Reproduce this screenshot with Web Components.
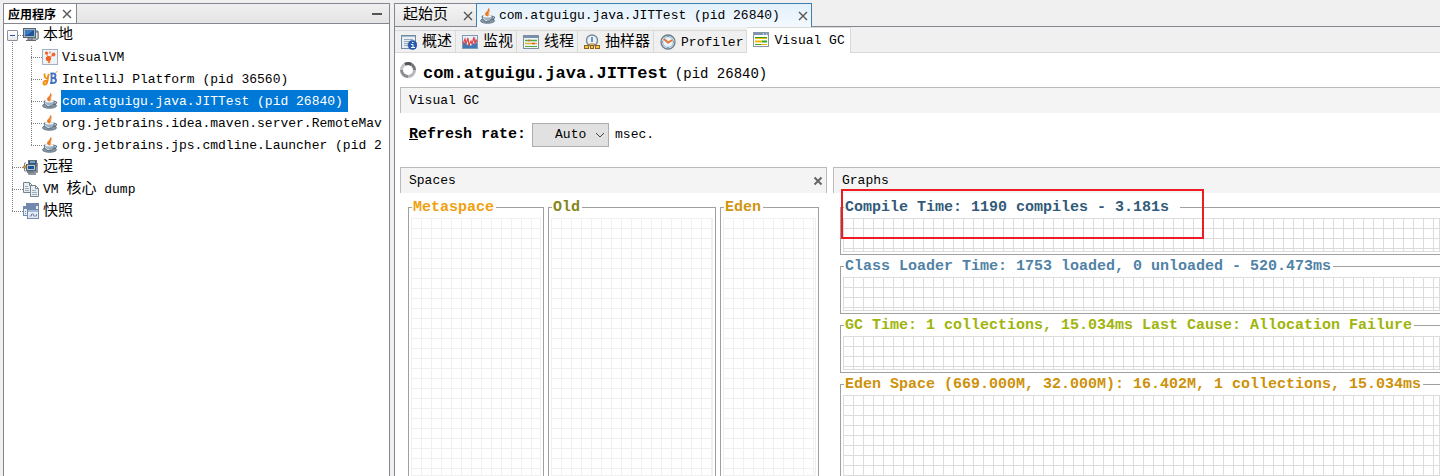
<!DOCTYPE html>
<html lang="zh-CN">
<head>
<meta charset="utf-8">
<title>VisualVM</title>
<style>
html, body { margin: 0; height: 100%; }
body { overflow: hidden; background: #f0f0f0; color: #000; font: 13px/22px "Liberation Mono", "Noto Sans CJK SC", monospace; }
</style>
</head>
<body>
<vm-app></vm-app>
<script>
const ICONS = {
  cup: `<ellipse cx="7.500" cy="12.800" rx="7" ry="2.500" fill="#8797a5" stroke="#56687a" stroke-width=".8"/><path d="M2 8h10.500c0 3-1.700 5.500-5.200 5.500S2 11 2 8Z" fill="#9fb2c1" stroke="#4f6579" stroke-width=".8"/><path d="M3.500 10c.5 1.800 1.800 2.600 3.500 2.600" stroke="#dbe5ec" fill="none"/><ellipse cx="7.300" cy="8.200" rx="4.300" ry="1.200" fill="#f4f7f9"/><path d="M12.500 8.500c3-.3 2.500 3.200-1.200 3" fill="none" stroke="#566b7e" stroke-width="1.200"/><path d="M8.500 .5C11 2.500 6.500 4 8 8L6 7.500C3.500 4.800 8.800 3.800 8.500 .5Z" fill="#e8761c" stroke="#e8761c" stroke-width=".8"/><path d="M11 3C8 4.500 9.500 6 9.500 8L8.500 7.500C7 5.500 8 4 11 3Z" fill="#f19a4a"/>`,
  vvm: `<rect x=".5" y=".5" width="15" height="15" fill="#eef3f8" stroke="#a3b2c2"/><path d="M4 4l3 5 5-4M7 9v3" stroke="#f79a6b" stroke-width="1.200" fill="none"/><circle cx="4.500" cy="4" r="1.500" fill="#ee5b1d"/><circle cx="8" cy="3.500" r="1" fill="#f08a55"/><circle cx="11.500" cy="5.500" r="1.900" fill="#f26a2e"/><circle cx="6.500" cy="9.500" r="2.600" fill="#ed621f"/><circle cx="7" cy="13" r="1.300" fill="#f0864e"/>`,
  jb: `<path d="M8.500 2.500h2.500c3.300 0 3.300 4.500 0 4.500H9.500m1.500 0c4 0 4 5 0 5H8" stroke="#4774c0" stroke-width="1.900" fill="none"/><path d="M9.500 2v10" stroke="#4774c0" stroke-width="1.800"/><path d="M2.500 2.500c0 4 .5 5 3.500 5M7 3C5 6 6.500 9 4.800 12 3.800 14 1.500 14 1.500 12.200S3.500 9.700 5.500 9.700" stroke="#f28d12" stroke-width="1.900" fill="none"/><path d="M13.500 1.500L15.500 .5" stroke="#f5a11a"/>`,
  pc: `<path d="M4 4h11v8H8z" fill="#c9cfd3" stroke="#626b72"/><path d="M13 5h2v7h-2" fill="#e5e9eb" stroke="#6c747a"/><rect x=".5" y="1.500" width="12" height="9" fill="#a8b5bf" stroke="#536675"/><rect x="2" y="3" width="9" height="6" fill="#1d559b"/><path d="M2 3h9L4 8H2Z" fill="#3c7cc4"/><path d="M5 11h4v2H5zM3 13.500h10" stroke="#616970" fill="#bcc4ca"/><path d="M10 10h1" stroke="#63cc38"/>`,
  remote: `<rect x="5.500" y="1.500" width="8" height="6" fill="#2b568b" stroke="#5f6e79"/><path d="M7 3h5" stroke="#d9e4ec"/><rect x="3.500" y="5.500" width="9" height="6" fill="#b8c5cf" stroke="#52616d"/><rect x="5" y="7" width="6" height="3" fill="#17559d"/><path d="M14 4v9H6v2h7" fill="none" stroke="#697680" stroke-width="1.500"/><path d="M3 4H1.500v8H4" fill="none" stroke="#888"/><circle cx="1.800" cy="8" r="1.500" fill="#d69b45" stroke="#88602b" stroke-width=".6"/><path d="M4 13h7" stroke="#71808b" stroke-width="2"/>`,
  dump: `<g fill="#e8edf2" stroke="#75838f"><path d="M.5 1.500h6l3 3v7h-9zM6.500 1.500v3h3"/><path d="M7.500 4.500h5l3 3v8h-8zM12.500 4.500v3h3"/></g><path d="M2 5.500h3M2 7.500h4M2 9.500h4M9 9.500h4M9 11.500h5M9 13.500h5" stroke="#9cacbb"/>`,
  snap: `<g fill="#e7edf5" stroke="#7089ad"><rect x="3.500" y=".5" width="12" height="9"/><path d="M4 2h11" stroke-width="2"/><rect x=".5" y="3.500" width="12" height="9"/><path d="M1 5h11" stroke-width="2"/><rect x="4.500" y="6.500" width="11" height="9"/></g><path d="M5 8h10" stroke="#6285b8"/><path d="M6.500 13h2v-2h2v2h3v-2" stroke="#758aa5" fill="none"/><path d="M2 8.500h1M2 10.500h1" stroke="#7d8fa8"/>`,
  info: `<rect x=".5" y="1.500" width="14" height="13" fill="#e7eff5" stroke="#718ba4"/><path d="M1 2.500h13" stroke="#a6bdd0"/><path d="M3 5.500h9M3 7.500h7M3 9.500h4M3 11.500h4" stroke="#9caab5"/><circle cx="11.500" cy="11" r="4.500" fill="#295bb4" stroke="#17458f" stroke-width=".5"/><path d="M10 10.500h2v3M10 13.500h4" fill="none" stroke="#fff"/><path d="M11 8.500h1.500" stroke="#fff" stroke-width="1.200"/>`,
  monitor: `<rect x=".5" y="1.500" width="15" height="13" fill="#e9f1f8" stroke="#7d9bb9"/><path d="M1 14v-4l2-2 2 3 2-1 2 2 2-3 2 1 2-2v6z" fill="#3e78b7"/><path d="M1 10l2-5 1 5 2-6 1 7 2-4 1 3 2-7 1 7 1-4 1 2" fill="none" stroke="#df4545" stroke-width="1.200"/>`,
  threads: `<rect x=".5" y="1.500" width="15" height="13" fill="#f2f5f8" stroke="#7d8ea0"/><path d="M1 3h14" stroke="#7890ab" stroke-width="2"/><path d="M2 6.500h12" stroke="#55a83c" stroke-width="1.500"/><path d="M2 9.500h12" stroke="#d6ba29" stroke-width="1.500"/><path d="M2 12.500h12" stroke="#50a746"/><path d="M5 6.500h2M9 9.500h3" stroke="#df5c31" stroke-width="1.500"/>`,
  sampler: `<circle cx="8" cy="6.500" r="5.500" fill="#e9f1f6" stroke="#79899a" stroke-width="1.400"/><path d="M8 3v4M8 5v3" stroke="#3979b6" stroke-width="1.500"/><path d="M3 12l3-2h4l3 2" stroke="#a77618" fill="none"/><g fill="#f1c552" stroke="#936315"><rect x=".5" y="11.500" width="4" height="3"/><rect x="6.500" y="11.500" width="3" height="3"/><rect x="11.500" y="11.500" width="4" height="3"/></g>`,
  profiler: `<circle cx="8" cy="8" r="7" fill="#dbeaf5" stroke="#6e7c88" stroke-width="1.300"/><circle cx="8" cy="8" r="5.300" fill="#eaf3f9" stroke="#9bbdd8"/><path d="M4 5l4 3.500L12.500 6" fill="none" stroke="#e37430" stroke-width="2"/><path d="M8 2v1M8 13v1M2 8h1M13 8h1" stroke="#4b7cab"/>`,
  gc: `<rect x=".5" y=".5" width="15" height="14" fill="#fff" stroke="#8996a3"/><path d="M1 2h14" stroke="#8095b2" stroke-width="2"/><path d="M10 2h1M13 2h1" stroke="#fff"/><path d="M2 5.500h12" stroke="#2e9b25"/><path d="M2 6.500h12" stroke="#efc000"/><path d="M2 9.500h7" stroke="#efb900" stroke-width="2"/><path d="M9 9.500h5" stroke="#34a82a" stroke-width="2"/><path d="M2 12.500h6" stroke="#34a82a"/><path d="M8 12.500h6" stroke="#e5b500"/>`,
  spin: `<g fill="none" stroke-width="3"><path d="M8 1.500A6.500 6.500 0 0 1 14.500 8" stroke="#777780"/><path d="M14.500 8A6.500 6.500 0 0 1 8 14.500" stroke="#b7b7bc"/><path d="M8 14.500A6.500 6.500 0 0 1 1.500 8" stroke="#8c8c92"/><path d="M1.500 8A6.500 6.500 0 0 1 8 1.500" stroke="#c4c4c8"/><path d="M5 2.300A6.500 6.500 0 0 1 11 2.300" stroke="#55555d"/></g>`,
  close: `<path d="M4 4l8 8M12 4l-8 8" stroke="#555" stroke-width="1.400"/>`,
  closeBold: `<path d="M4.500 4.500l7 7M11.500 4.500l-7 7" stroke="#666" stroke-width="2"/>`,
  min: `<path d="M3 8h10" stroke="#555" stroke-width="2"/>`,
  down: `<path d="M4 6l4 4 4-4" fill="none" stroke="#444"/>`
};

function define(name, html, ready) {
  const t = document.createElement('template');
  t.innerHTML = '<style>*{box-sizing:border-box}button{font:inherit;color:inherit;margin:0;padding:0;border:0;background:none}</style>' + html;
  customElements.define(name, class extends HTMLElement {
    connectedCallback() {
      if (this.shadowRoot) return;
      this.attachShadow({ mode: 'open' }).append(t.content.cloneNode(true));
      if (ready) ready(this, this.shadowRoot);
    }
  });
}

/* One row of the application tree, with its dotted guides */
define('vm-node', `<style>
:host{display:block}
.row{display:flex;align-items:center;height:22px;white-space:nowrap}
.g{flex:none;width:19px;height:22px;--dot:#808080 0 1px,transparent 1px 2px;
 background:repeating-linear-gradient(180deg,var(--dot)) 8px 0/1px var(--v,22px) no-repeat,
 repeating-linear-gradient(90deg,var(--dot)) 8px 11px/var(--h,11px) 1px no-repeat}
.g.parent{display:none;--h:0}
:host([level="2"]) .parent{display:block}
:host([last]) .own{--v:12px}
:host([open]) .own{background-position:8px 12px,8px 11px}
button{display:none;width:11px;height:11px;margin:6px 0 0 3px;border:1px solid #8a929c;border-radius:1px;background:linear-gradient(#2d4fa5,#2d4fa5) 2px 4px/5px 1px no-repeat,linear-gradient(#fff,#e8e8e8)}
:host([open]) button{display:block}
.label{padding:2px 5px 0 1px;margin-left:3px;line-height:20px}
:host([selected]) .label{background:#0078d7;color:#fff}
</style><div class="row"><span class="g parent"></span><span class="g own"><button aria-label="折叠"></button></span><vm-icon></vm-icon><span class="label"><slot></slot></span></div>`,
  (el, r) => r.querySelector('vm-icon').setAttribute('name', el.getAttribute('icon')));

define('vm-sidebar', `<style>
:host{display:flex;flex-direction:column;min-width:0;overflow:hidden;background:#fff;border:1px solid #828790;border-bottom:0}
header{display:flex;height:20px;border-bottom:1px solid #828790;background:linear-gradient(#f0f0f0,#e4e4e4);justify-content:space-between;align-items:stretch}
.tab{display:flex;align-items:center;background:#fff;border-right:1px solid #828790;padding:0 1px 0 4px;font:bold 12px/18px "Noto Sans CJK SC",sans-serif;gap:3px}
button{display:flex;align-items:center}.min{padding-right:4px}
nav{overflow:hidden;flex:1}
.c{font-size:15px}
</style>
<header><div class="tab"><span>应用程序</span><button aria-label="关闭"><vm-icon name="close"></vm-icon></button></div><button class="min" aria-label="最小化"><vm-icon name="min"></vm-icon></button></header>
<nav>
<vm-node icon="pc" open><span class="c">本地</span></vm-node>
<vm-node icon="vvm" level="2">VisualVM</vm-node>
<vm-node icon="jb" level="2">IntelliJ Platform (pid 36560)</vm-node>
<vm-node icon="cup" level="2" selected>com.atguigu.java.JITTest (pid 26840)</vm-node>
<vm-node icon="cup" level="2">org.jetbrains.idea.maven.server.RemoteMav</vm-node>
<vm-node icon="cup" level="2" last>org.jetbrains.jps.cmdline.Launcher (pid 2</vm-node>
<vm-node icon="remote"><span class="c">远程</span></vm-node>
<vm-node icon="dump">VM <span class="c">核心</span> dump</vm-node>
<vm-node icon="snap" last><span class="c">快照</span></vm-node>
</nav>`);

define('vm-doctabs', `<style>
:host{display:flex;height:24px;box-shadow:inset 0 -1px #828790}
.tab{display:flex;align-items:center;border:1px solid #828790;border-left:0;background:linear-gradient(#f4f4f4,#e6e6e6)}
.home{padding:0 0 0 8px;gap:12px;font-size:15px;border-right:0}
.home button{padding-top:2px;line-height:20px}
.on{border:1px solid #3c7fb1;border-bottom:0;background:linear-gradient(#e2f0fb,#f4f9fe);padding-left:3px;gap:3px}
.on .x{margin-left:12px}
button{display:flex;align-items:center;white-space:nowrap}
</style>
<div class="tab home"><button>起始页</button><button aria-label="关闭"><vm-icon name="close"></vm-icon></button></div>
<div class="tab on"><vm-icon name="cup"></vm-icon><button>com.atguigu.java.JITTest (pid 26840)</button><button class="x" aria-label="关闭"><vm-icon name="close"></vm-icon></button></div>`);

define('vm-viewtab', `<style>
:host{display:flex;height:23px;background:#f0f0f0;border:1px solid #d9d9d9;border-left:0}
button{display:flex;align-items:center;gap:5px;padding:0 3px 0 6px;white-space:nowrap}
span{padding-top:2px;line-height:19px}
:host([cjk]) button{font-size:15px}
:host([selected]){height:26px;background:#fff;border-bottom:0;align-self:flex-end;padding-bottom:2px}
:host([selected]) button{padding-right:5px}
</style><button><vm-icon></vm-icon><span><slot></slot></span></button>`,
  (el, r) => r.querySelector('vm-icon').setAttribute('name', el.getAttribute('icon')));

define('vm-viewtabs', `<style>:host{display:flex;align-items:flex-end;height:26px;background:linear-gradient(#d9d9d9,#d9d9d9) 0 100%/100% 1px no-repeat #f0f0f0}</style>
<vm-viewtab icon="info" cjk>概述</vm-viewtab><vm-viewtab icon="monitor" cjk>监视</vm-viewtab><vm-viewtab icon="threads" cjk>线程</vm-viewtab><vm-viewtab icon="sampler" cjk>抽样器</vm-viewtab><vm-viewtab icon="profiler">Profiler</vm-viewtab><vm-viewtab icon="gc" selected>Visual GC</vm-viewtab>`);

define('vm-bar', `<style>
:host{display:flex;align-items:center;justify-content:space-between;height:26px;padding-left:8px;background:#f4f4f4;border:1px solid #bbb;border-bottom:0;border-right:0}
:host([closable]){border-right:1px solid #bbb}
button{display:none}:host([closable]) button{display:block}
</style><span><slot></slot></span><button aria-label="关闭"><vm-icon name="closeBold"></vm-icon></button>`);

/* Titled frame around a ruled plot area */
define('vm-plot', `<style>
:host{display:flex;min-width:0}
fieldset{flex:1;display:flex;min-width:0;margin:0;padding:2px;border:1px solid #a0a0a0}
legend{margin-left:1px;padding:2px 2px 0 1px;height:18px;font:bold 15px/16px "Liberation Mono",monospace;white-space:nowrap}
:host([wide]) legend{padding-right:11px}
.grid{flex:1;min-height:34px;border:1px solid var(--line);border-width:0 1px 1px 0;
background:repeating-linear-gradient(90deg,var(--line) 0 1px,transparent 1px 10px),repeating-linear-gradient(180deg,var(--line) 0 1px,#fff 1px 10px)}
:host([fill]) fieldset{border-bottom:0;padding-bottom:0}
:host([bleed]) fieldset{border-right:0;padding-right:0}
</style><fieldset><legend><slot></slot></legend><div class="grid"></div></fieldset>`);

define('vm-spaces', `<style>
:host{display:flex;flex-direction:column;min-width:0}
.plots{flex:1;display:grid;grid-template-columns:136fr 168fr 99fr;gap:4px;padding:5px 8px 0;--line:#f0f0f0}
</style><vm-bar closable>Spaces</vm-bar>
<div class="plots"><vm-plot fill style="color:#f0a010">Metaspace</vm-plot><vm-plot fill style="color:#858517">Old</vm-plot><vm-plot fill style="color:#d09510">Eden</vm-plot></div>`);

define('vm-graphs', `<style>
:host{display:flex;flex-direction:column;min-width:0;position:relative}
.plots{flex:1;display:flex;flex-direction:column;gap:2px;padding:5px 0 0 7px;--line:#dcdcdc}
.rest{flex:1}
.mark{position:absolute;left:8px;top:22px;width:363px;height:50px;border:2px solid #ed1c24;pointer-events:none}
</style><vm-bar>Graphs</vm-bar>
<div class="plots">
<vm-plot bleed wide style="color:#325a78">Compile Time: 1190 compiles - 3.181s</vm-plot>
<vm-plot bleed style="color:#5082a5">Class Loader Time: 1753 loaded, 0 unloaded - 520.473ms</vm-plot>
<vm-plot bleed style="color:#a0b40a">GC Time: 1 collections, 15.034ms Last Cause: Allocation Failure</vm-plot>
<vm-plot bleed fill class="rest" style="color:#cd910a">Eden Space (669.000M, 32.000M): 16.402M, 1 collections, 15.034ms</vm-plot>
</div><div class="mark"></div>`);

define('vm-document', `<style>
:host{display:flex;flex-direction:column;min-width:0;border-left:1px solid #828790;background:#f0f0f0}
main{flex:1;display:flex;flex-direction:column;background:#fff;padding-left:5px}
h1{display:flex;align-items:center;gap:7px;height:34px;margin:0;font-size:17px;white-space:nowrap}
h1 span{padding-top:8px}h1 .pid{font-size:14px;font-weight:normal}
.rate{display:flex;align-items:center;height:54px;padding:0 9px 10px;gap:6px}
label{font-size:15px;font-weight:bold}
label::first-letter{text-decoration:underline}
.pick{display:flex;align-items:center;position:relative}
select{appearance:none;width:77px;height:24px;margin:0;padding:0 0 0 22px;border:1px solid #adadad;border-radius:0;background:#e1e1e1;color:#000;font:inherit}
.pick vm-icon{position:absolute;right:1px;pointer-events:none}
.split{flex:1;display:grid;grid-template-columns:427fr 607fr;gap:6px}
</style>
<vm-doctabs></vm-doctabs><vm-viewtabs></vm-viewtabs>
<main><h1><vm-icon name="spin"></vm-icon><span>com.atguigu.java.JITTest</span><span class="pid">(pid 26840)</span></h1>
<vm-bar>Visual GC</vm-bar>
<div class="rate"><label for="rate">Refresh rate:</label><span class="pick"><select id="rate"><option>Auto</option></select><vm-icon name="down"></vm-icon></span><span>msec.</span></div>
<div class="split"><vm-spaces></vm-spaces><vm-graphs></vm-graphs></div></main>`);

define('vm-app', `<style>:host{display:grid;grid-template-columns:387px minmax(0,1fr);gap:4px;min-height:100vh;padding:3px 0 0 3px;box-sizing:border-box}</style>
<vm-sidebar></vm-sidebar><vm-document></vm-document>`);

/* Registered last, once every host has passed its icon name down */
define('vm-icon', `<style>:host{display:block;flex:none;width:16px;height:16px}svg{display:block}</style><svg width="16" height="16" viewBox="0 0 16 16" aria-hidden="true"></svg>`,
  (el, r) => { r.querySelector('svg').innerHTML = ICONS[el.getAttribute('name')]; });
</script>
</body>
</html>
